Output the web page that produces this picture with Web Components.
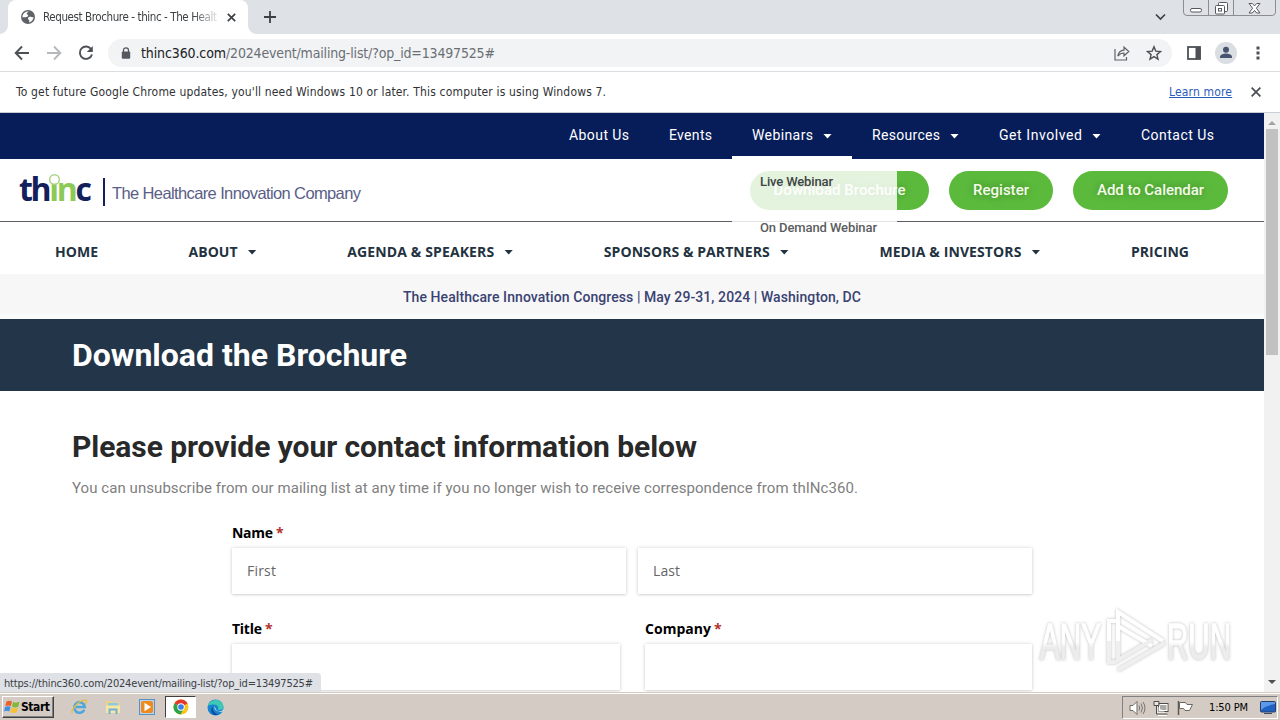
<!DOCTYPE html>
<html lang="en">
<head>
<meta charset="utf-8">
<title>Request Brochure - thinc - The Healthcare Innovation Company</title>
<style>
    html, body { margin: 0; height: 720px; overflow: hidden; background: #fff; }
    body {
        display: flex;
        flex-direction: column;
        width: 1280px;
        position: relative;
        font-family: "Open Sans", "Noto Sans", sans-serif;
    }
    .viewport { display: flex; height: 579px; overflow: hidden; flex: none; }
    .page { width: 1264px; display: flex; flex-direction: column; }
</style>
</head>
<body>
    <browser-tabs><fit-text w="174">Request Brochure - thinc - The Healt</fit-text></browser-tabs>
    <browser-toolbar></browser-toolbar>
    <browser-notice></browser-notice>
    <div class="viewport">
        <div class="page">
            <top-menu></top-menu>
            <site-header></site-header>
            <main-menu></main-menu>
            <event-strip></event-strip>
            <page-banner><fit-text w="335">Download the Brochure</fit-text></page-banner>
            <contact-form></contact-form>
        </div>
        <scroll-bar></scroll-bar>
    </div>
    <task-bar></task-bar>
    <status-bubble><fit-text w="309">https://thinc360.com/2024event/mailing-list/?op_id=13497525#</fit-text></status-bubble>
    <run-watermark></run-watermark>

<script>
(function() {
    const UI_FONT = 'Tahoma, "DejaVu Sans Condensed", "DejaVu Sans", sans-serif';

    // Registers an element whose shadow root is cloned from a template
    function define(name, html) {
        const template = document.createElement('template');
        template.innerHTML = html;
        customElements.define(name, class extends HTMLElement {
            constructor() {
                super();
                this.attachShadow({ mode: 'open' });
                this.shadowRoot.appendChild(template.content.cloneNode(true));
            }
        });
    }

    define('browser-tabs', `
        <style>
            :host { display: flex; height: 34px; flex: none; background: #dee1e6; padding-left: 8px; font: 11.500px ${UI_FONT}; font-stretch: condensed; color: #3c4043; }
            .tab { position: relative; display: flex; align-items: center; width: 240px; background: #fff; border-radius: 8px 8px 0 0; box-sizing: border-box; padding-left: 13px; }
            .tab::before, .tab::after { content: ""; position: absolute; bottom: 0; width: 8px; height: 8px; }
            .tab::before { left: -8px; background: radial-gradient(circle at 0 0, #dee1e6 7.5px, #fff 8px); }
            .tab::after { right: -8px; background: radial-gradient(circle at 100% 0, #dee1e6 7.5px, #fff 8px); }
            .title { margin-left: 8px; width: 175px; overflow: hidden; -webkit-mask-image: linear-gradient(90deg, #000 150px, transparent 178px); }
            .close { margin-left: 9px; }
            .plus { margin: 11px 0 0 16px; }
            .chevron { margin: 13px 0 0 auto; }
            .window { display: flex; width: 93px; height: 18px; margin: -2px 4px 0 17px; border: 1px solid #8b8d92; border-radius: 0 0 4px 4px; box-sizing: border-box; }
            .window span { display: flex; justify-content: center; width: 24px; border-right: 1px solid #8b8d92; }
            .window span:last-child { flex: 1; border: 0; }
        </style>
        <div class="tab">
            <svg width="14" height="14" viewBox="0 0 14 14"><circle cx="7" cy="7" r="7" fill="#5f6368"/><path d="M7.5 1.5c-.2 1.2-1.7.8-1.8 2 0 1.5 1.5.7 1.5 2.2 0 1.3-2.3.7-2.6 1.6H1.4C1.4 4 4 1.3 7.500 1.500zM8 7c1.500-.8 2.500.3 4.500.3-.2 2.400-2 4.500-4.300 5.100-.2-1.200.6-1.800-.2-2.500C6.500 9.500 6.700 7.600 8 7z" fill="#fff"/></svg>
            <div class="title"><slot></slot></div>
            <svg class="close" width="9" height="9" viewBox="0 0 9 9"><path d="M.8.8l7.400 7.400M8.200.8L.8 8.200" stroke="#3c4043" stroke-width="1.700"/></svg>
        </div>
        <svg class="plus" width="12" height="12" viewBox="0 0 12 12"><path d="M6 0v12M0 6h12" stroke="#3c4043" stroke-width="1.800"/></svg>
        <svg class="chevron" width="11" height="8" viewBox="0 0 11 8"><path d="M1 1.500l4.500 4.500L10 1.500" fill="none" stroke="#3c4043" stroke-width="1.700"/></svg>
        <div class="window">
            <span><svg width="12" height="16"><rect x=".5" y="9.500" width="11" height="3.500" rx="1.500" fill="#fff" stroke="#55585e"/></svg></span>
            <span><svg width="13" height="16"><rect x="3.500" y="3.500" width="9" height="9" rx="1" fill="#fff" stroke="#55585e"/><rect x=".5" y="6.500" width="9" height="8.500" rx="1" fill="#fff" stroke="#55585e"/><rect x="3.500" y="9.500" width="3" height="2.500" fill="none" stroke="#55585e"/></svg></span>
            <span><svg width="13" height="16"><path d="M1 4.500h3.300l2.200 2.400 2.200-2.400H12L8.400 9.200l3.600 4.800H8.700L6.500 11.500 4.300 14H1l3.600-4.800z" fill="#fff" stroke="#55585e"/></svg></span>
        </div>
    `);

    define('browser-toolbar', `
        <style>
            :host { display: flex; align-items: center; height: 38px; flex: none; box-sizing: border-box; border-bottom: 1px solid #dadce0; padding: 0 14px 0 14px; background: #fff; font: 14px ${UI_FONT}; font-stretch: condensed; color: #202124; }
            .nav { display: flex; gap: 16px; }
            .omnibox { display: flex; align-items: center; width: 1064px; height: 28px; margin-left: 14px; border-radius: 14px; background: #f1f3f4; box-sizing: border-box; padding: 0 10px 0 13px; }
            .lock { margin-right: 10px; }
            .path { color: #6b6f74; }
            .share { margin-left: auto; }
            .star { margin-left: 16px; }
            .avatar { margin: 0 16px 0 14px; }
            .panel { margin-left: 15px; }
        </style>
        <div class="nav">
            <svg width="16" height="16" viewBox="0 0 16 16"><path d="M15 8H2M8 1.500L1.700 8 8 14.500" fill="none" stroke="#4d5156" stroke-width="1.900"/></svg>
            <svg width="16" height="16" viewBox="0 0 16 16"><path d="M1 8h13M8 1.500L14.300 8 8 14.500" fill="none" stroke="#b6b8bb" stroke-width="1.900"/></svg>
            <svg width="16" height="16" viewBox="0 0 16 16"><path d="M13.200 4.200A6.200 6.200 0 1 0 14 9.500" fill="none" stroke="#4d5156" stroke-width="1.900"/><path d="M14.800 1v6H8.800z" fill="#4d5156"/></svg>
        </div>
        <div class="omnibox">
            <svg class="lock" width="10" height="12" viewBox="0 0 10 12"><path d="M2.500 5V3.300a2.500 2.500 0 0 1 5 0V5" fill="none" stroke="#55585e" stroke-width="1.300"/><rect x=".8" y="4.500" width="8.400" height="7.200" rx="1" fill="#55585e"/></svg>
            <fit-text w="85">thinc360.com</fit-text><fit-text w="269" class="path">/2024event/mailing-list/?op_id=13497525#</fit-text>
            <svg class="share" width="16" height="16" viewBox="0 0 16 16"><path d="M1 4v11h11.500v-3" fill="none" stroke="#5f6368" stroke-width="1.200"/><path d="M3.800 11.200C4.500 7.500 6.500 5.500 10 5.200V2.200l4.800 4.300-4.800 4.300V8C7.500 8 5.500 9 3.800 11.200z" fill="none" stroke="#5f6368" stroke-width="1.200"/></svg>
            <svg class="star" width="16" height="16" viewBox="0 0 16 16"><path d="M8 1.700l1.800 4.400 4.700.4-3.600 3.100 1.100 4.600L8 11.700l-4 2.500 1.100-4.600-3.600-3.100 4.700-.4z" fill="none" stroke="#4d5156" stroke-width="1.400"/></svg>
        </div>
        <svg class="panel" width="14" height="14" viewBox="0 0 14 14"><rect x="1" y="1" width="12" height="12" fill="#fff" stroke="#4d5156" stroke-width="1.800"/><rect x="8.500" y="1" width="5" height="12" fill="#4d5156"/></svg>
        <svg class="avatar" width="22" height="22" viewBox="0 0 22 22"><circle cx="11" cy="11" r="11" fill="#dadde2"/><circle cx="11" cy="7.800" r="3" fill="#48546f"/><path d="M5 16v-1.300c0-2 4-3.200 6-3.200s6 1.200 6 3.200V16z" fill="#48546f"/></svg>
        <svg width="4" height="14" viewBox="0 0 4 14" style="margin-left:3px"><path d="M.5.500h3v3h-3zM.5 5.500h3v3h-3zM.5 10.500h3v3h-3z" fill="#4d5156"/></svg>
    `);

    define('browser-notice', `
        <style>
            :host { display: flex; align-items: center; height: 41px; flex: none; box-sizing: border-box; border-bottom: 1px solid #c9cdd6; padding: 0 19px 0 16px; background: #fff; font: 12px ${UI_FONT}; font-stretch: condensed; color: #303236; }
            a { color: #2a5db8; margin-left: auto; }
            a fit-text { text-decoration: underline; }
            svg { margin-left: 19px; }
        </style>
        <fit-text w="590">To get future Google Chrome updates, you'll need Windows 10 or later. This computer is using Windows 7.</fit-text>
        <a><fit-text w="63">Learn more</fit-text></a>
        <svg width="10" height="10" viewBox="0 0 10 10"><path d="M.6.6l8.800 8.800M9.400.6L.6 9.400" stroke="#4d5156" stroke-width="1.800"/></svg>
    `);

    // Menu entry: label, optional caret, optional open marker below
    define('menu-item', `
        <style>
            :host { display: flex; align-items: center; position: relative; }
            i { display: none; width: 9px; height: 5px; margin: 2px 0 0 10px; background: currentColor; clip-path: polygon(0 0, 100% 0, 50% 100%); }
            :host([caret]) i { display: block; }
            :host([open])::after { content: ""; position: absolute; left: 0; right: 0; bottom: 0; height: 3px; background: #fff; }
        </style>
        <slot></slot><i></i>
    `);

    define('top-menu', `
        <style>
            :host { display: flex; justify-content: flex-end; height: 46px; flex: none; box-sizing: border-box; padding-right: 30px; background: #071d59; color: #fff; font: 14px Roboto, sans-serif; }
            menu-item { padding: 0 20px; height: 46px; box-sizing: border-box; padding-bottom: 2px; }
        </style>
        <menu-item><fit-text w="60">About Us</fit-text></menu-item>
        <menu-item><fit-text w="43">Events</fit-text></menu-item>
        <menu-item caret open><fit-text w="61">Webinars</fit-text></menu-item>
        <menu-item caret><fit-text w="68">Resources</fit-text></menu-item>
        <menu-item caret><fit-text w="83">Get Involved</fit-text></menu-item>
        <menu-item><fit-text w="73">Contact Us</fit-text></menu-item>
    `);

    define('pill-button', `
        <style>
            :host { display: flex; align-items: center; justify-content: center; height: 39px; border-radius: 20px; background: #5bba3c; color: #f4fbe9; font: 500 15px Roboto, sans-serif; text-shadow: 0 0 8px rgba(0,0,0,.3); }
        </style>
        <slot></slot>
    `);

    define('site-header', `
        <style>
            :host { display: flex; align-items: center; position: relative; height: 63px; flex: none; box-sizing: border-box; border-bottom: 1px solid #5b5e66; padding: 0 36px 0 19px; }
            .logo { position: relative; font: 700 32px/40px "Open Sans", sans-serif; color: #14205c; margin-top: -2px; }
            .logo b { font-weight: 700; color: #8cc955; }
            .logo svg { position: absolute; left: 29px; top: 4px; }
            .bar { width: 2px; height: 28px; margin: 4px 7px 0 11px; background: #14205c; }
            .tagline { font: 16.500px "Liberation Sans", Arial, sans-serif; color: #5a5e86; margin-top: 7px; }
            .buttons { display: flex; gap: 20px; margin-left: auto; }
            .dropdown { position: absolute; z-index: 2; left: 732px; top: 0; width: 165px; height: 92px; background: linear-gradient(rgba(255,255,255,.83) 80px, transparent 80px); font: 500 13px Roboto, sans-serif; color: #3f4445; }
            .dropdown div { height: 46px; padding: 0 0 2px 28px; box-sizing: border-box; display: flex; align-items: center; }
            .dropdown div + div { color: #5b5d60; }
        </style>
        <div class="logo"><fit-text w="73">th<b>in</b>c</fit-text>
            <svg width="14" height="13"><rect width="14" height="6" fill="#fff"/><circle cx="6.500" cy="6.500" r="4.800" fill="#fff" stroke="#a9d489" stroke-width="1.500"/></svg>
        </div>
        <div class="bar"></div>
        <fit-text class="tagline" w="249">The Healthcare Innovation Company</fit-text>
        <div class="buttons">
            <pill-button style="width:179px"><fit-text w="132">Download Brochure</fit-text></pill-button>
            <pill-button style="width:104px"><fit-text w="56">Register</fit-text></pill-button>
            <pill-button style="width:155px"><fit-text w="107">Add to Calendar</fit-text></pill-button>
        </div>
        <div class="dropdown">
            <div><fit-text w="73">Live Webinar</fit-text></div>
            <div><fit-text w="117">On Demand Webinar</fit-text></div>
        </div>
    `);

    define('main-menu', `
        <style>
            :host { display: flex; justify-content: space-between; height: 52px; flex: none; box-sizing: border-box; padding: 8px 75px 2px 55px; font: 700 14px "Open Sans", sans-serif; color: #233240; }
        </style>
        <menu-item><fit-text w="43">HOME</fit-text></menu-item>
        <menu-item caret><fit-text w="49">ABOUT</fit-text></menu-item>
        <menu-item caret><fit-text w="147">AGENDA &amp; SPEAKERS</fit-text></menu-item>
        <menu-item caret><fit-text w="166">SPONSORS &amp; PARTNERS</fit-text></menu-item>
        <menu-item caret><fit-text w="142">MEDIA &amp; INVESTORS</fit-text></menu-item>
        <menu-item><fit-text w="58">PRICING</fit-text></menu-item>
    `);

    define('event-strip', `
        <style>
            :host { display: flex; justify-content: center; align-items: center; height: 45px; flex: none; box-sizing: border-box; border-bottom: 5px solid #fafbfc; padding-top: 6px; background: #f7f7f7; font: 500 14px Roboto, sans-serif; color: #3a4272; }
        </style>
        <fit-text w="458">The Healthcare Innovation Congress | May 29-31, 2024 | Washington, DC</fit-text>
    `);

    define('page-banner', `
        <style>
            :host { display: flex; align-items: center; height: 72px; flex: none; padding-left: 72px; background: #233649; color: #fff; font: 700 32px Roboto, sans-serif; }
        </style>
        <slot></slot>
    `);

    define('form-field', `
        <style>
            :host { display: block; }
            .label { height: 20px; margin-bottom: 5px; font: 700 14px/20px "Open Sans", sans-serif; color: #000; white-space: nowrap; }
            .box { height: 46px; box-sizing: border-box; padding-left: 15px; font: 14px/46px "Open Sans", sans-serif; color: #666; background: #fff; box-shadow: 0 0 4px rgba(0,0,0,.16), 0 1px 2px rgba(0,0,0,.1); }
        </style>
        <div class="label"><slot name="label"></slot></div>
        <div class="box"><slot></slot></div>
    `);

    define('contact-form', `
        <style>
            :host { display: block; padding: 36px 0 0 72px; }
            h2 { margin: 0; height: 40px; font: 700 30px/40px Roboto, sans-serif; color: #292929; }
            p { margin: 11px 0 0; height: 20px; font: 15px/20px Roboto, sans-serif; color: #808080; }
            .row { display: flex; margin-left: 160px; }
            .names { margin-top: 25px; gap: 12px; }
            .work { margin-top: 25px; gap: 25px; }
            .label em { font-style: normal; color: #b3312c; margin-left: 3px; }
        </style>
        <h2><fit-text w="625">Please provide your contact information below</fit-text></h2>
        <p><fit-text w="786">You can unsubscribe from our mailing list at any time if you no longer wish to receive correspondence from thINc360.</fit-text></p>
        <div class="row names">
            <form-field style="width:394px"><span slot="label" class="label"><fit-text w="41">Name</fit-text><em>*</em></span><fit-text w="29">First</fit-text></form-field>
            <form-field style="width:394px"><fit-text w="27">Last</fit-text></form-field>
        </div>
        <div class="row work">
            <form-field style="width:388px"><span slot="label" class="label"><fit-text w="30">Title</fit-text><em>*</em></span></form-field>
            <form-field style="width:387px"><span slot="label" class="label"><fit-text w="66">Company</fit-text><em>*</em></span></form-field>
        </div>
    `);

    define('scroll-bar', `
        <style>
            :host { display: flex; flex-direction: column; align-items: center; width: 16px; background: #f1f1f1; }
            .up, .down { width: 8px; height: 4px; margin-top: 8px; background: #a3a3a3; clip-path: polygon(50% 0, 100% 100%, 0 100%); }
            .thumb { width: 12px; height: 226px; margin-top: 4px; background: #c1c1c1; }
            .down { margin: auto 0 8px; background: #505050; clip-path: polygon(0 0, 100% 0, 50% 100%); }
        </style>
        <div class="up"></div><div class="thumb"></div><div class="down"></div>
    `);

    define('status-bubble', `
        <style>
            :host { position: absolute; left: 0; top: 673px; width: 321px; height: 19px; box-sizing: border-box; padding: 1px 0 0 4px; display: flex; align-items: center; background: #dee1e6; border-radius: 0 4px 0 0; font: 11px ${UI_FONT}; font-stretch: condensed; color: #3c4043; }
        </style>
        <slot></slot>
    `);

    define('task-bar', `
        <style>
            :host { display: flex; height: 28px; flex: none; box-sizing: border-box; border-top: 1px solid #d4ccc4; background: #d4ccc4; box-shadow: inset 0 1px #fff; padding: 3px 2px 1px; font: 11px ${UI_FONT}; font-stretch: condensed; color: #000; }
            .start { display: flex; align-items: center; width: 52px; height: 22px; box-sizing: border-box; border: 1px solid; border-color: #fff #404040 #404040 #fff; box-shadow: inset -1px -1px #808080; padding-left: 1px; font: 700 12px ${UI_FONT}; font-stretch: condensed; }
            .apps { display: flex; align-items: center; height: 22px; margin-left: 17px; }
            .chrome { display: flex; align-items: center; justify-content: center; width: 31px; height: 22px; margin: 0 11px 0 10px; box-sizing: border-box; background: #fff; border: 1px solid; border-color: #404040 #fff #fff #404040; }
            .tray { display: flex; align-items: center; width: 156px; height: 23px; margin-left: auto; box-sizing: border-box; border: 1px solid; border-color: #808080 #fff #fff #808080; padding-left: 6px; }
        </style>
        <div class="start">
            <svg width="17" height="16" viewBox="0 0 17 16"><path d="M2.500 2.500c2-1.200 3.500-1 5.500 0L6.800 7.200C5 6.200 3.300 6.200 1.300 7z" fill="#e8602c"/><path d="M9 2.800c2 1.200 4 1 6.500 0l-1.300 5c-2 1-4 1-6.200-.2z" fill="#7fb93b"/><path d="M1 8c2-1 3.700-1 5.500 0l-1.200 4.500C3.500 11.500 2 11.500 0 12.500z" fill="#3f8fe0"/><path d="M7.700 8.600c2 1 4 1 6.200.2l-1.200 4.500c-2 1-4.200 1-6.200 0z" fill="#f6c02e"/></svg>
            <fit-text w="29">Start</fit-text>
        </div>
        <div class="apps">
            <svg width="17" height="18" viewBox="0 0 17 18"><path d="M13.300 11.800A5.300 5.300 0 1 1 13.800 9H5" fill="none" stroke="#4da6dc" stroke-width="2.600"/><path d="M1.500 15.500C-1 12 8 2 14.500 2.200c1.500.3 1 2.300 0 4" fill="none" stroke="#e8bd3c" stroke-width="1.300"/></svg>
            <svg width="16" height="16" viewBox="0 0 16 16" style="margin-left:17px"><path d="M1 2h5l1 1.500h7V14H1z" fill="#edd483"/><path d="M3 4h10v3H3z" fill="#8cc8de"/><path d="M1 6.500h14V14H1z" fill="#f6e5a3"/><path d="M4.500 15v-4.500h7V15" fill="none" stroke="#71afd5" stroke-width="2"/></svg>
            <svg width="16" height="16" viewBox="0 0 16 16" style="margin-left:18px"><rect x=".5" y=".5" width="15" height="15" fill="#b6d5ee" stroke="#5c91bf"/><rect x="2" y="2" width="12" height="12" rx="2" fill="#f18a1c"/><path d="M5.500 3.800v8.400L12 8z" fill="#fff"/></svg>
            <div class="chrome"><svg width="16" height="16" viewBox="0 0 16 16"><circle cx="8" cy="8" r="7.500" fill="#f8c51c"/><path d="M8 8L1.500 4.200A7.500 7.500 0 0 1 14.500 4.500z" fill="#e3392c"/><path d="M8 8L1.500 4.200A7.500 7.500 0 0 0 7.500 15.500L10.500 10z" fill="#2fa24c"/><circle cx="8" cy="8" r="3.700" fill="#fff"/><circle cx="8" cy="8" r="2.800" fill="#3b7de8"/></svg></div>
            <svg width="17" height="17" viewBox="0 0 17 17"><circle cx="8.500" cy="8.500" r="8" fill="#1685d0"/><path d="M.7 7C2 1 13-2.500 16.300 6.500c.8 3.500-2 5-5.300 4.200 1.200-3-1-5.200-4.200-5.200C4 5.500 1.500 6 .7 7z" fill="#3fc9b5"/><path d="M6.300 7c-1.800 3 .7 7.800 6 8.300-7 3.200-10.500-4.500-6-8.300z" fill="#104a9c"/><path d="M8 7c-1.500 2.500.5 5.500 4.500 5.300 2 0 3.300-1 4-2l-.4 2c-4 1.700-8.300-1-8.100-5.300z" fill="#d7e6ee"/></svg>
        </div>
        <div class="tray">
            <svg width="17" height="16" viewBox="0 0 17 16"><path d="M1 5.500h3L8 1.500v13l-4-4H1z" fill="#fff" stroke="#6b6862"/><path d="M10 5.500q1.500 2.500 0 5M12 3.500q3 4.500 0 9M14 2q4 6 0 12" fill="none" stroke="#77736c"/></svg>
            <svg width="16" height="16" viewBox="0 0 16 16" style="margin-left:7px"><rect x="5.500" y="3.500" width="9.500" height="8" fill="#aaa9a5" stroke="#4f4d49"/><rect x="6.500" y="4.500" width="7.500" height="6" fill="none" stroke="#fff"/><path d="M1 1.500h5v4H1zM3.500 5.500v8.500h11" fill="#fff" fill-opacity=".5" stroke="#4f4d49"/><path d="M5 15.500h9" stroke="#fff"/></svg>
            <svg width="17" height="16" viewBox="0 0 17 16" style="margin-left:8px"><path d="M1.500 1v14" stroke="#5a5853" stroke-width="1.500"/><path d="M2.500 2.500h6l1.500 2h5.500l-3 6H8L6.500 8.500h-4z" fill="#fff" stroke="#6b6862"/></svg>
            <fit-text w="39" style="margin-left:15px">1:50 PM</fit-text>
            <svg width="16" height="14" viewBox="0 0 16 14" style="margin-left:12px"><rect x=".5" y=".5" width="15" height="10.500" rx="1" fill="#1f62c4" stroke="#2a3c66"/><path d="M1 1h14v2Q7 4 1 9z" fill="#5a9ae8"/><path d="M4 12.500h8" stroke="#3f4c69"/></svg>
        </div>
    `);

    define('run-watermark', `
        <style>
            :host { position: absolute; left: 1034px; top: 604px; width: 214px; height: 72px; pointer-events: none; }
            svg { display: block; overflow: visible; filter: drop-shadow(0 0 1.500px rgba(0,0,0,.26)); }
            text { font: 400 50px "Liberation Sans Narrow", "Liberation Sans", sans-serif; fill: url(#fade); stroke: url(#fade); stroke-width: 1.500px; }
        </style>
        <svg width="214" height="72" viewBox="0 0 214 72">
            <defs><linearGradient id="fade" x1="0" y1="0" x2="0" y2="1"><stop offset=".5" stop-color="#fff"/><stop offset=".6" stop-color="#ececec"/></linearGradient></defs>
            <text x="6" y="55" textLength="61" lengthAdjust="spacingAndGlyphs">ANY</text>
            <text x="133" y="55" textLength="64" lengthAdjust="spacingAndGlyphs">RUN</text>
            <g fill="none" stroke-width="4">
                <path d="M84 37V8l45 29M82 17h-7v20M84 22l34 20" stroke="#fff"/>
                <path d="M84 37v19l34-20M75 37v21h7M84 66l45-26v-3" stroke="#efefef"/>
            </g>
        </svg>
    `);

    // Tracks its text out (or in) to the width given in pixels
    class FitText extends HTMLElement {
        constructor() {
            super();
            this.attachShadow({ mode: 'open' });
            this.shadowRoot.innerHTML = `
                <style>:host { display: inline-block; white-space: nowrap; flex: none; }</style>
                <slot></slot>
            `;
        }

        connectedCallback() {
            const width = parseFloat(this.getAttribute('w'));
            const natural = this.getBoundingClientRect().width;
            const spacing = (width - natural) / (this.textContent.length - 1);
            this.style.letterSpacing = `${spacing.toFixed(3)}px`;
            this.style.width = `${width}px`;
        }
    }

    customElements.define('fit-text', FitText);
})();
</script>
</body>
</html>
